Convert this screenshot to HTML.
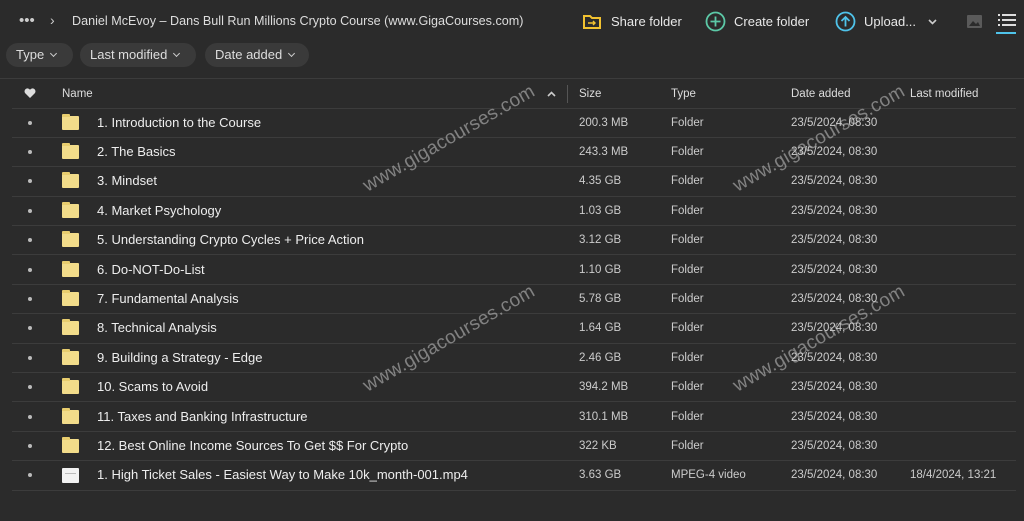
<!DOCTYPE html>
<html><head><meta charset="utf-8"><style>
*{margin:0;padding:0;box-sizing:border-box}
body{width:1024px;height:521px;background:#2b2b2b;font-family:"Liberation Sans",sans-serif;color:#e8e8e8;position:relative;overflow:hidden}
.a{position:absolute;white-space:nowrap}
.pill{position:absolute;top:43px;height:24px;border-radius:12px;background:#3a3a3a;font-size:13px;color:#ddd;line-height:24px;padding-left:10px}
.chev{display:inline-block;width:5px;height:5px;border-right:1.5px solid #ccc;border-bottom:1.5px solid #ccc;transform:rotate(45deg);margin-left:7px;position:relative;top:-3px}
.row{position:absolute;left:12px;width:1004px;height:29.4px;border-bottom:1px solid #3c3c3c;font-size:12px}
.row .n{position:absolute;left:85px;top:6px;font-size:13px;color:#eee}
.row .c{position:absolute;top:8px;color:#ccc;font-size:11.5px}
.dot{position:absolute;left:16px;top:12px;width:4px;height:4px;border-radius:50%;background:#bbb}
.fold{position:absolute;left:50px;top:7px;width:17px;height:14px;background:#f2dc8a;border-radius:1px}
.fold:before{content:"";position:absolute;left:0;top:-2px;width:8px;height:3px;background:#e8cd6e;border-radius:1px 1px 0 0}
.wm{position:absolute;font-size:19px;color:rgba(200,200,200,.55);transform:rotate(-30deg);white-space:nowrap;letter-spacing:0.3px}
.h{position:absolute;top:88px;font-size:11.5px;color:#ddd}
</style></head><body>
<div class="a" style="left:19px;top:12px;font-size:15px;color:#ccc;letter-spacing:0px">•••</div>
<div class="a" style="left:50px;top:12px;font-size:14px;color:#ccc">›</div>
<div class="a" style="left:72px;top:14px;font-size:12.6px;color:#ddd">Daniel McEvoy – Dans Bull Run Millions Crypto Course (www.GigaCourses.com)</div>
<svg class="a" style="left:583px;top:13px" width="18" height="16"><path d="M1 3h6l2 2h8v10H1z" fill="none" stroke="#f2c230" stroke-width="2"/><path d="M5 10h7M10 8l2 2-2 2" stroke="#f2c230" stroke-width="1.4" fill="none"/></svg>
<div class="a" style="left:611px;top:14px;font-size:13px">Share folder</div>
<svg class="a" style="left:705px;top:11px" width="21" height="21"><circle cx="10.5" cy="10.5" r="9" fill="none" stroke="#5cc9a7" stroke-width="1.8"/><path d="M10.5 5.5v10M5.5 10.5h10" stroke="#5cc9a7" stroke-width="1.8"/></svg>
<div class="a" style="left:734px;top:14px;font-size:13px">Create folder</div>
<svg class="a" style="left:835px;top:11px" width="21" height="21"><circle cx="10.5" cy="10.5" r="9" fill="none" stroke="#4fc3ea" stroke-width="1.8"/><path d="M10.5 15.5v-9M6.5 10l4-4 4 4" stroke="#4fc3ea" stroke-width="1.8" fill="none"/></svg>
<div class="a" style="left:864px;top:14px;font-size:13px">Upload...</div>
<svg class="a" style="left:928px;top:19px" width="9" height="6"><path d="M1 1l3.5 3.5L8 1" stroke="#ccc" stroke-width="1.6" fill="none"/></svg>
<svg class="a" style="left:967px;top:15px" width="15" height="13"><rect width="15" height="13" rx="1" fill="#5a5a5a"/><path d="M2 11l4-5 3 3 2-2 2 4z" fill="#2b2b2b"/></svg>
<svg class="a" style="left:998px;top:13px" width="18" height="16"><path d="M0 2h2M4 2h14M0 7h2M4 7h14M0 12h2M4 12h14" stroke="#ddd" stroke-width="2"/></svg>
<div class="a" style="left:996px;top:32px;width:20px;height:2px;background:#4fc3ea"></div>
<div class="pill" style="left:6px;width:67px">Type<span class="chev"></span></div>
<div class="pill" style="left:80px;width:116px">Last modified<span class="chev"></span></div>
<div class="pill" style="left:205px;width:104px">Date added<span class="chev"></span></div>
<div class="a" style="left:0;top:78px;width:1024px;height:1px;background:#3c3c3c"></div>
<div class="a" style="left:12px;top:108px;width:1004px;height:1px;background:#3c3c3c"></div>
<svg class="a" style="left:24px;top:88px" width="12" height="11"><path d="M6 10L1 5a2.6 2.6 0 015-3.2A2.6 2.6 0 0111 5z" fill="#ddd"/></svg>
<div class="h" style="left:62px">Name</div>
<svg class="a" style="left:547px;top:91px" width="9" height="6"><path d="M1 5l3.5-3.5L8 5" stroke="#ccc" stroke-width="1.6" fill="none"/></svg>
<div class="a" style="left:567px;top:85px;width:1px;height:18px;background:#555"></div>
<div class="h" style="left:579px">Size</div>
<div class="h" style="left:671px">Type</div>
<div class="h" style="left:791px">Date added</div>
<div class="h" style="left:910px">Last modified</div>
<div id="rows"></div>
<script>
var d=[["1. Introduction to the Course","200.3 MB"],["2. The Basics","243.3 MB"],["3. Mindset","4.35 GB"],["4. Market Psychology","1.03 GB"],["5. Understanding Crypto Cycles + Price Action","3.12 GB"],["6. Do-NOT-Do-List","1.10 GB"],["7. Fundamental Analysis","5.78 GB"],["8. Technical Analysis","1.64 GB"],["9. Building a Strategy - Edge","2.46 GB"],["10. Scams to Avoid","394.2 MB"],["11. Taxes and Banking Infrastructure","310.1 MB"],["12. Best Online Income Sources To Get $$ For Crypto","322 KB"],["1. High Ticket Sales - Easiest Way to Make 10k_month-001.mp4","3.63 GB"]];
var h="";d.forEach(function(r,i){var v=i==12;h+='<div class="row" style="top:'+(108.5+i*29.4)+'px"><div class="dot"></div>'+(v?'<div style="position:absolute;left:50px;top:7px;width:17px;height:15px;background:#f2f2f2;border-radius:1px"><div style="margin:5px 3px;height:1px;background:#bbb"></div></div>':'<div class="fold"></div>')+'<div class="n">'+r[0]+'</div><div class="c" style="left:567px">'+r[1]+'</div><div class="c" style="left:659px">'+(v?'MPEG-4 video':'Folder')+'</div><div class="c" style="left:779px">23/5/2024, 08:30</div>'+(v?'<div class="c" style="left:898px">18/4/2024, 13:21</div>':'')+'</div>';});
document.getElementById("rows").innerHTML=h;
</script>
<div class="wm" style="left:352px;top:128px">www.gigacourses.com</div>
<div class="wm" style="left:722px;top:128px">www.gigacourses.com</div>
<div class="wm" style="left:352px;top:328px">www.gigacourses.com</div>
<div class="wm" style="left:722px;top:328px">www.gigacourses.com</div>
</body></html>
